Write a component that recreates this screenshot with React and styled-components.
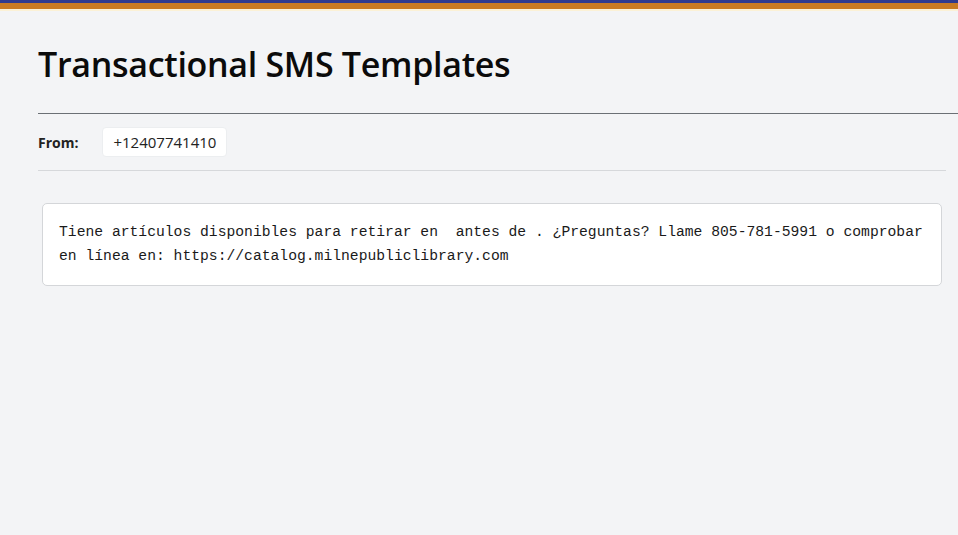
import React from "react";
import styled, { createGlobalStyle } from "styled-components";

const Global = createGlobalStyle`
  html, body { margin: 0; padding: 0; background: #f3f4f6; }
  body { font-family: "Open Sans", "Noto Sans", sans-serif; color: #111; }
`;

const Page = styled.div`
  min-height: 535px;
  background: #f3f4f6;
`;

const TopStripe = styled.div`
  height: 3px;
  background: #2f3a8f;
  border-bottom: 6px solid #c97a23;
  box-shadow: 0 2px 0 #fbf1d6;
`;

const Content = styled.div`
  padding: 0 0 0 38px;
`;

const Title = styled.h1`
  margin: 0;
  padding: 33px 0 27px;
  font-size: 34px;
  font-weight: 600;
  line-height: 44px;
  color: #0b0b0b;
  border-bottom: 1px solid #6b7075;
  letter-spacing: -0.3px;
`;

const FromRow = styled.div`
  display: flex;
  align-items: center;
  gap: 24px;
  margin-right: 12px;
  padding: 13px 0 13px;
  border-bottom: 1px solid #d6d8db;
`;

const FromLabel = styled.span`
  font-size: 14px;
  font-weight: 700;
  color: #222;
`;

const Phone = styled.span`
  background: #fff;
  border: 1px solid #eceef0;
  border-radius: 4px;
  padding: 4px 10px;
  font-size: 15px;
  line-height: 20px;
  color: #222;
`;

const Card = styled.div`
  margin: 32px 16px 0 4px;
  background: #fff;
  border: 1px solid #d4d6d9;
  border-radius: 5px;
  padding: 16px 16px 17px;
  font-family: "Liberation Mono", "DejaVu Sans Mono", monospace;
  font-size: 14.7px;
  line-height: 24px;
  color: #1a1a1a;
  white-space: pre-wrap;
`;

export default function App() {
  return (
    <Page>
      <Global />
      <TopStripe />
      <Content>
        <Title>Transactional SMS Templates</Title>
        <FromRow>
          <FromLabel>From:</FromLabel>
          <Phone>+12407741410</Phone>
        </FromRow>
        <Card>
          {"Tiene artículos disponibles para retirar en  antes de . ¿Preguntas? Llame 805-781-5991 o comprobar en línea en: https://catalog.milnepubliclibrary.com"}
        </Card>
      </Content>
    </Page>
  );
}
